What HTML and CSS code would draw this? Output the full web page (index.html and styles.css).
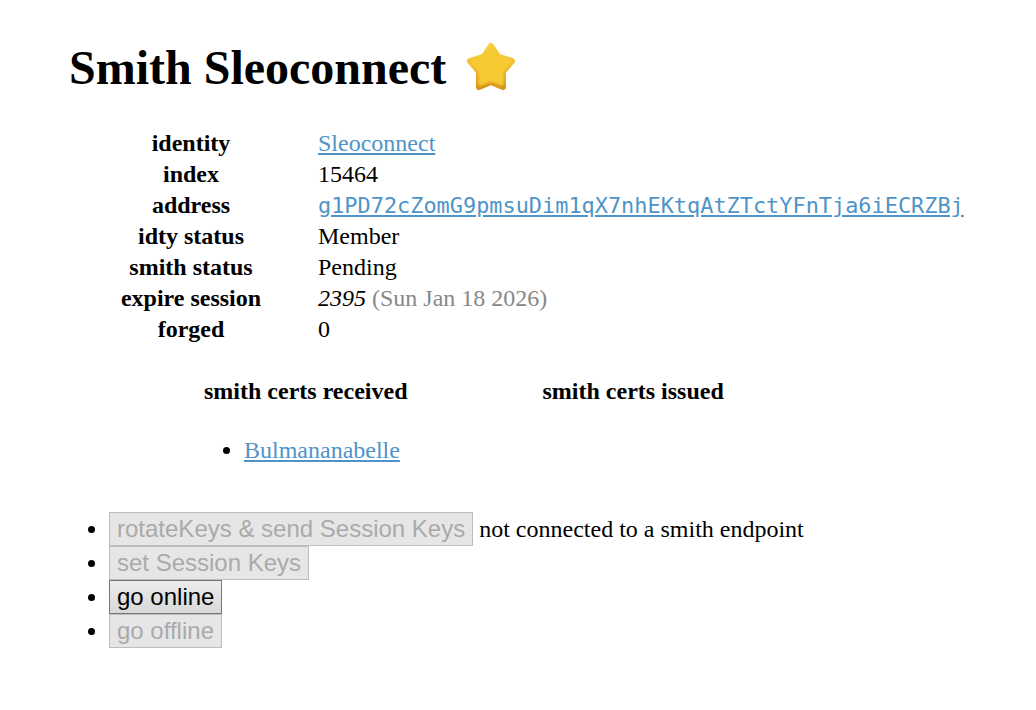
FILE: index.html
```html
<!DOCTYPE html>
<html lang="en">
<head>
  <meta charset="UTF-8">
  <title>Smith Sleoconnect</title>
  <link rel="stylesheet" href="styles.css">
</head>
<body>
  <main class="page">
    <h1 class="title">Smith Sleoconnect
      <svg class="star" viewBox="0 0 54 54" aria-hidden="true">
        <defs>
          <linearGradient id="starEdge" x1="0" y1="0" x2="0" y2="1">
            <stop offset="0" stop-color="#f5d24a"/>
            <stop offset="0.55" stop-color="#efb92a"/>
            <stop offset="1" stop-color="#d9951a"/>
          </linearGradient>
          <filter id="starSoft" x="-15%" y="-15%" width="130%" height="130%">
            <feGaussianBlur stdDeviation="1.1"/>
          </filter>
        </defs>
        <path class="star-base" d="M26 6 L33 16.500 L47 21 L38 31.500 L38 47 L26 42 L14 47 L14 31.500 L5 21 L19 16.500 Z"/>
        <path class="star-top" filter="url(#starSoft)" d="M26 8 L32 17.500 L44.500 21.500 L36.500 30.500 L36.500 43.500 L26 39.500 L15.500 43.500 L15.500 30.500 L7.500 21.500 L20 17.500 Z"/>
      </svg>
    </h1>

    <table class="info">
      <tr><th>identity</th><td><a href="#">Sleoconnect</a></td></tr>
      <tr><th>index</th><td>15464</td></tr>
      <tr><th>address</th><td><a href="#"><code>g1PD72cZomG9pmsuDim1qX7nhEKtqAtZTctYFnTja6iECRZBj</code></a></td></tr>
      <tr><th>idty status</th><td>Member</td></tr>
      <tr><th>smith status</th><td>Pending</td></tr>
      <tr><th>expire session</th><td><em>2395</em> <span class="muted">(Sun Jan 18 2026)</span></td></tr>
      <tr><th>forged</th><td>0</td></tr>
    </table>

    <table class="certs">
      <tr><th>smith certs received</th><th>smith certs issued</th></tr>
      <tr>
        <td>
          <ul>
            <li><a href="#">Bulmananabelle</a></li>
          </ul>
        </td>
        <td></td>
      </tr>
    </table>

    <ul class="actions">
      <li><button disabled>rotateKeys &amp; send Session Keys</button> not connected to a smith endpoint</li>
      <li><button disabled>set Session Keys</button></li>
      <li><button>go online</button></li>
      <li><button disabled>go offline</button></li>
    </ul>
  </main>
</body>
</html>
```

FILE: styles.css
```css
body {
  margin: 0;
  font-family: "Liberation Serif", serif;
  font-size: 24px;
  color: #000;
  background-color: #fff;
}

.page {
  padding: 0 69px;
}

.title {
  margin: 0;
  padding-top: 37px;
  font-size: 48px;
  line-height: 62px;
}

.star {
  width: 54px;
  height: 54px;
  vertical-align: -10px;
  margin-left: 7px;
}

.star-base {
  fill: url(#starEdge);
  stroke: url(#starEdge);
  stroke-width: 6;
  stroke-linejoin: round;
}

.star-top {
  fill: #f6ca30;
  stroke: #f6ca30;
  stroke-width: 4;
  stroke-linejoin: round;
}

.info {
  margin-top: 29px;
  border-spacing: 0;
  border-collapse: separate;
}

.info th {
  width: 242px;
  padding: 2px 1px;
  line-height: 27px;
}

.info td {
  padding: 2px 1px 2px 5px;
  line-height: 27px;
}

a {
  color: #4f94c8;
}

code {
  font-family: "DejaVu Sans Mono", monospace;
  font-size: 21.9px;
}

.muted {
  color: #888;
}

.certs {
  margin: 31px 0 0 135px;
  border-spacing: 0;
}

.certs th {
  padding: 1px 0 0;
  line-height: 29px;
}

.certs th + th {
  padding-left: 135px;
}

.certs ul {
  margin: 30px 0 24px;
  padding-left: 39px;
}

.actions {
  margin: 23px 0 0;
  padding-left: 40px;
}

.actions li {
  line-height: 34px;
}

button {
  font-family: "Liberation Sans", sans-serif;
  font-size: 24px;
  height: 34px;
  padding: 0 7px;
  color: #000;
  background: linear-gradient(#ececec, #d8d8d8);
  border: 1px solid #767676;
  vertical-align: bottom;
}

button:disabled {
  color: #aaa;
  background: #e6e6e6;
  border-color: #bdbdbd;
}
```
